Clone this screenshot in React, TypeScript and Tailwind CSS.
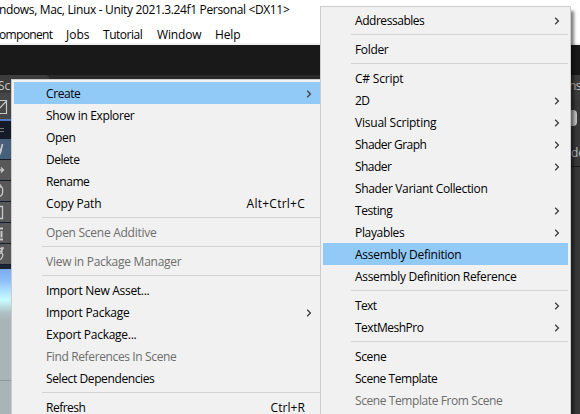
import { useLayoutEffect, useRef } from "react";

type Entry =
  | { label: string; w: number; arrow?: boolean; active?: boolean; disabled?: boolean; keys?: string; keysW?: number }
  | null;

const contextMenu: Entry[] = [
  { label: "Create", w: 34, arrow: true, active: true },
  { label: "Show in Explorer", w: 88 },
  { label: "Open", w: 29 },
  { label: "Delete", w: 33 },
  { label: "Rename", w: 43 },
  { label: "Copy Path", w: 55, keys: "Alt+Ctrl+C", keysW: 58 },
  null,
  { label: "Open Scene Additive", w: 110, disabled: true },
  null,
  { label: "View in Package Manager", w: 135, disabled: true },
  null,
  { label: "Import New Asset...", w: 103 },
  { label: "Import Package", w: 83, arrow: true },
  { label: "Export Package...", w: 90 },
  { label: "Find References In Scene", w: 130, disabled: true },
  { label: "Select Dependencies", w: 108 },
  null,
  { label: "Refresh", w: 39, keys: "Ctrl+R", keysW: 34 },
];

const createMenu: Entry[] = [
  { label: "Addressables", w: 69, arrow: true },
  null,
  { label: "Folder", w: 33 },
  null,
  { label: "C# Script", w: 48 },
  { label: "2D", w: 14, arrow: true },
  { label: "Visual Scripting", w: 81, arrow: true },
  { label: "Shader Graph", w: 71, arrow: true },
  { label: "Shader", w: 36, arrow: true },
  { label: "Shader Variant Collection", w: 132 },
  { label: "Testing", w: 37, arrow: true },
  { label: "Playables", w: 49, arrow: true },
  { label: "Assembly Definition", w: 106, active: true },
  { label: "Assembly Definition Reference", w: 161 },
  null,
  { label: "Text", w: 21, arrow: true },
  { label: "TextMeshPro", w: 68, arrow: true },
  null,
  { label: "Scene", w: 31 },
  { label: "Scene Template", w: 82 },
  { label: "Scene Template From Scene", w: 147, disabled: true },
];

// Tightens or loosens tracking so that the text fills the given width.
function Fit({ text, w }: { text: string; w: number }) {
  const ref = useRef<HTMLSpanElement>(null);
  useLayoutEffect(() => {
    const el = ref.current;
    if (!el) return;
    el.style.letterSpacing = "0px";
    const natural = el.getBoundingClientRect().width;
    el.style.letterSpacing = `${(w + 0.4 - natural) / text.length}px`;
  }, [text, w]);
  return (
    <span ref={ref} className="inline-block whitespace-pre">
      {text}
    </span>
  );
}

function Chevron() {
  return (
    <svg width="6" height="8" viewBox="0 0 6 8" fill="none" stroke="#444" strokeWidth="1.4">
      <path d="M1.2 0.8 4.4 4 1.2 7.2" />
    </svg>
  );
}

function MenuRows({ items }: { items: Entry[] }) {
  return (
    <>
      {items.map((item, i) =>
        item ? (
          <div
            key={i}
            className={`flex h-[22px] shrink-0 items-center pl-8 pr-2 pt-px leading-[22px] ${item.active ? "bg-[#91c9f7]" : ""} ${item.disabled ? "text-[#6d6d6d]" : "text-black"}`}
          >
            <Fit text={item.label} w={item.w} />
            <span className="flex-1" />
            {item.keys && (
              <span className="pr-[7px]">
                <Fit text={item.keys} w={item.keysW ?? 0} />
              </span>
            )}
            {item.arrow && <Chevron />}
          </div>
        ) : (
          <div key={i} className="h-[7px] shrink-0 pl-7 pt-[3px]">
            <div className="h-px bg-[#d3d3d3]" />
          </div>
        ),
      )}
    </>
  );
}

const tool = "flex h-[21px] shrink-0 border-b border-[#151d2c] bg-[#585858]";

function Glyph({ d, w = 1.3 }: { d: string; w?: number }) {
  return (
    <svg width="11" height="20" viewBox="0 0 11 20" fill="none" stroke="#c8c8c8" strokeWidth={w}>
      <path d={d} />
    </svg>
  );
}

function SceneStrip() {
  return (
    <div className="flex w-[11px] shrink-0 flex-col overflow-hidden bg-[#3c3c3c]">
      <div className="h-[18px] shrink-0 whitespace-nowrap pt-[3px] text-[12px] leading-[16px] text-[#c8c8c8]">
        <span className="-ml-[2px]">Sc</span>
      </div>
      <div className="h-[26px] shrink-0 bg-[#464646] pt-[4px]">
        <svg width="11" height="18" viewBox="0 0 11 18" fill="none" stroke="#c8c8c8" strokeWidth="1.2">
          <path d="M-4 3.5H6.5V16.5H-4M-2 13 6 4.5" />
        </svg>
      </div>
      <div className="h-[2px] shrink-0 bg-[#5478bd]" />
      <div className="h-[18px] shrink-0 bg-[#151a28]">
        <svg width="11" height="18" stroke="#777" strokeWidth="1">
          <path d="M0 7.5H4M0 10.5H4" />
        </svg>
      </div>
      <div className="flex h-[21px] shrink-0 border-b border-[#151d2c] bg-[#46607c]">
        <Glyph d="M-2 6 0.5 13 2.5 5M-1 15 1.5 11" w={1.7} />
      </div>
      <div className={tool}><Glyph d="M-2 10H3M1 7.5 3.5 10 1 12.5" /></div>
      <div className={tool}><Glyph d="M-1 4.5C4 5 4 15-1 15.5M0 3V7" /></div>
      <div className={tool}><Glyph d="M-2 4.5H2.5V16.5H-2" /></div>
      <div className={tool}><Glyph d="M-1 5.5H3M-1 16.5H3M1.5 8V14.5" w={2} /></div>
      <div className={tool}><Glyph d="M-1 5C2 3 3 7 1 9C4 9 3 15-1 16M0 8 3 5M1 4H4" /></div>
      <div className="h-[4px] shrink-0 bg-[#1c2433]" />
      <div className="h-[112px] shrink-0 border-b border-[#8d989c] bg-[linear-gradient(to_bottom,#7baaf0_0px,#8dc0fa_12px,#b5e8ff_24px,#c8fbfd_31px,#aebfc4_44px,#a9b4b8_52px,#a9b4b8_112px)]" />
      <div className="flex-1 bg-[#a9b4b8]" />
    </div>
  );
}

export default function App() {
  return (
    <div className="relative flex h-[414px] w-[580px] flex-col overflow-hidden bg-[#191919] font-['Open_Sans','Noto_Sans',sans-serif] text-[12px] text-black">
      <div className="h-[22px] shrink-0 bg-white leading-[20px]">
        <span className="-ml-[1px]"><Fit text="ndows, Mac, Linux - Unity 2021.3.24f1 Personal <DX11>" w={290} /></span>
      </div>
      <div className="flex h-[23px] shrink-0 border-b-2 border-[#f0f0f0] bg-white leading-[26px]">
        <div className="w-[66px]"><span className="-ml-[1px]"><Fit text="omponent" w={53} /></span></div>
        <div className="w-[37px]"><Fit text="Jobs" w={23} /></div>
        <div className="w-[54px]"><Fit text="Tutorial" w={39} /></div>
        <div className="w-[58px]"><Fit text="Window" w={44} /></div>
        <Fit text="Help" w={25} />
      </div>
      <div className="h-[30px] shrink-0 bg-[#191919]" />
      <div className="flex h-[339px] shrink-0">
        <SceneStrip />
        <div className="flex min-w-0 flex-1 flex-col">
          <div className="flex h-[4px] shrink-0 bg-[#292929]"><div className="w-[38px] rounded-tr-sm bg-[#3c3c3c]" /></div>
          <div className="flex min-h-0 flex-1">
            <div className="flex w-[309px] shrink-0 flex-col overflow-hidden border-l border-t border-[#cccccc] bg-[#f1f1f1] pl-[2px] pt-[2px]">
              <MenuRows items={contextMenu} />
            </div>
          </div>
        </div>
        <div className="flex w-[9px] shrink-0 flex-col overflow-hidden bg-[#383838] text-[#bdbdbd]">
          <div className="h-[25px] shrink-0 bg-[#3c3c3c] leading-[22px]"><span className="-ml-[2px] tracking-[-0.6px]">ns</span></div>
          <div className="mt-[10px] h-[16px] w-[6px] shrink-0 rounded-r-sm bg-[#c4c4c4]" />
          <div className="h-[41px] shrink-0 border-b border-[#1a1a1a] leading-[54px]">de</div>
        </div>
      </div>
      <div className="absolute left-[320px] top-[6px] flex h-[420px] w-[251px] flex-col border border-[#cccccc] bg-[#f1f1f1] p-[2px] shadow-[4px_4px_3px_-1px_rgba(0,0,0,0.5)]">
        <MenuRows items={createMenu} />
      </div>
    </div>
  );
}
